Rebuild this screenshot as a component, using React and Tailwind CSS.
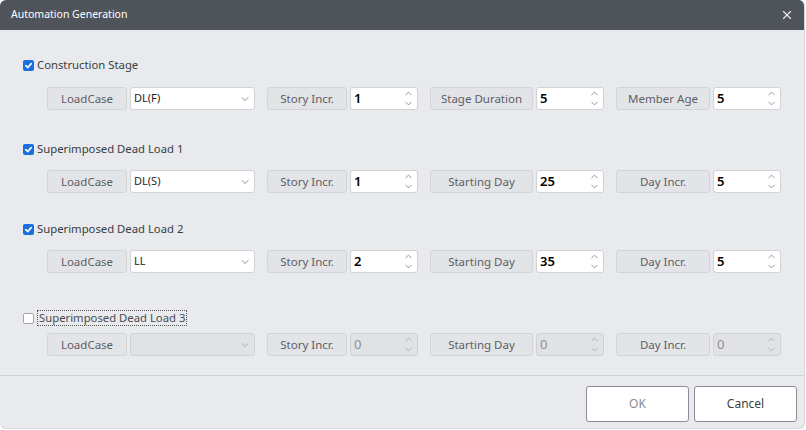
import { X, ChevronDown, ChevronUp } from 'lucide-react'

const sections = [
  {
    title: 'Construction Stage', checked: true, head: 'mt-[28px]', gap: 'mt-[15px]',
    lc: 'DL(F)', story: '1', mid: ['Stage Duration', '5'], last: ['Member Age', '5'],
  },
  {
    title: 'Superimposed Dead Load 1', checked: true, head: 'mt-[32px]', gap: 'mt-[14px]',
    lc: 'DL(S)', story: '1', mid: ['Starting Day', '25'], last: ['Day Incr.', '5'],
  },
  {
    title: 'Superimposed Dead Load 2', checked: true, head: 'mt-[29px]', gap: 'mt-[14px]',
    lc: 'LL', story: '2', mid: ['Starting Day', '35'], last: ['Day Incr.', '5'],
  },
  {
    title: 'Superimposed Dead Load 3', checked: false, head: 'mt-[38px]', gap: 'mt-[8px]',
    lc: '', story: '0', mid: ['Starting Day', '0'], last: ['Day Incr.', '0'],
  },
]

function Check({ on }) {
  if (!on) return <span className="w-[11px] h-[11px] rounded-[2px] border border-[#a3a7ad] bg-white shrink-0" />
  return (
    <span className="w-[11px] h-[11px] rounded-[2px] bg-[#1a6fe0] shrink-0 flex items-center justify-center">
      <svg width="9" height="9" viewBox="0 0 10 10">
        <path d="M2 5.2 L4.2 7.3 L8 2.9" fill="none" stroke="#fff" strokeWidth="1.8" strokeLinecap="round" strokeLinejoin="round" />
      </svg>
    </span>
  )
}

function Tag({ text, w }) {
  return (
    <div className={`${w} h-[23px] shrink-0 rounded-[3px] border border-[#d2d4d8] bg-[#e3e4e7] flex items-center justify-center text-[11.5px] text-[#5c5f64]`}>
      {text}
    </div>
  )
}

function Spin({ value, on }) {
  return (
    <div className={`w-[68px] h-[23px] shrink-0 rounded-[3px] border border-[#cfd2d7] flex items-center pl-[3px] pr-[3px] ${on ? 'bg-white' : 'bg-[#e1e2e5]'}`}>
      <span className={`flex-1 text-[13px] ${on ? 'text-black font-semibold' : 'text-[#8d9096]'}`}>{value}</span>
      <div className={`flex flex-col items-center -space-y-[1px] ${on ? 'text-[#7d8187]' : 'text-[#a4a7ac]'}`}>
        <ChevronUp size={11} strokeWidth={1.8} />
        <ChevronDown size={11} strokeWidth={1.8} />
      </div>
    </div>
  )
}

function Select({ value, on }) {
  return (
    <div className={`w-[125px] h-[23px] shrink-0 rounded-[3px] border border-[#cfd2d7] flex items-center pl-[3px] pr-[3px] ${on ? 'bg-white' : 'bg-[#e1e2e5]'}`}>
      <span className="flex-1 text-[11px] text-[#1f1f1f]">{value}</span>
      <ChevronDown size={12} strokeWidth={1.8} className={on ? 'text-[#7d8187]' : 'text-[#a4a7ac]'} />
    </div>
  )
}

export default function App() {
  return (
    <div className="w-[806px] h-[430px] bg-white" style={{ fontFamily: '"Noto Sans", "Liberation Sans", sans-serif' }}>
      <div className="w-[805px] h-[429px] rounded-[6px] overflow-hidden border-r border-b border-[#d3d5d9] bg-[#e9eaed] flex flex-col">
        {/* title bar */}
        <div className="h-[30px] shrink-0 bg-[#4f545b] flex items-center justify-between pl-[11px] pr-[10px]">
          <span className="text-[10.5px] text-white">Automation Generation</span>
          <X size={14} strokeWidth={2} className="text-[#e8e9eb]" />
        </div>

        <div className="flex-1 flex flex-col">
          {sections.map(s => (
            <div key={s.title} className={s.head}>
              <div className="h-[14px] flex items-center pl-[23px] gap-[3px]">
                <Check on={s.checked} />
                <span className={`text-[11.3px] leading-[14px] ${s.checked ? 'text-[#3a3d42]' : 'text-[#4a4d52] border border-dotted border-[#555] px-[1px]'}`}>
                  {s.title}
                </span>
              </div>
              <div className={`${s.gap} flex items-center pl-[47px]`}>
                <Tag text="LoadCase" w="w-[80px]" />
                <div className="ml-[3px]"><Select value={s.lc} on={s.checked} /></div>
                <div className="ml-[12px]"><Tag text="Story Incr." w="w-[80px]" /></div>
                <div className="ml-[3px]"><Spin value={s.story} on={s.checked} /></div>
                <div className="ml-[12px]"><Tag text={s.mid[0]} w="w-[103px]" /></div>
                <div className="ml-[3px]"><Spin value={s.mid[1]} on={s.checked} /></div>
                <div className="ml-[12px]"><Tag text={s.last[0]} w="w-[94px]" /></div>
                <div className="ml-[3px]"><Spin value={s.last[1]} on={s.checked} /></div>
              </div>
            </div>
          ))}
        </div>

        {/* footer */}
        <div className="h-[53px] shrink-0 border-t border-[#cdd0d5] flex items-start justify-end gap-[5px] pt-[10px] pr-[7px]">
          <button className="w-[103px] h-[36px] rounded-[3px] border border-[#8b8f95] bg-white text-[12px] text-[#8a8d92]">OK</button>
          <button className="w-[103px] h-[36px] rounded-[3px] border border-[#8b8f95] bg-white text-[12px] text-[#3b3e43]">Cancel</button>
        </div>
      </div>
    </div>
  )
}
